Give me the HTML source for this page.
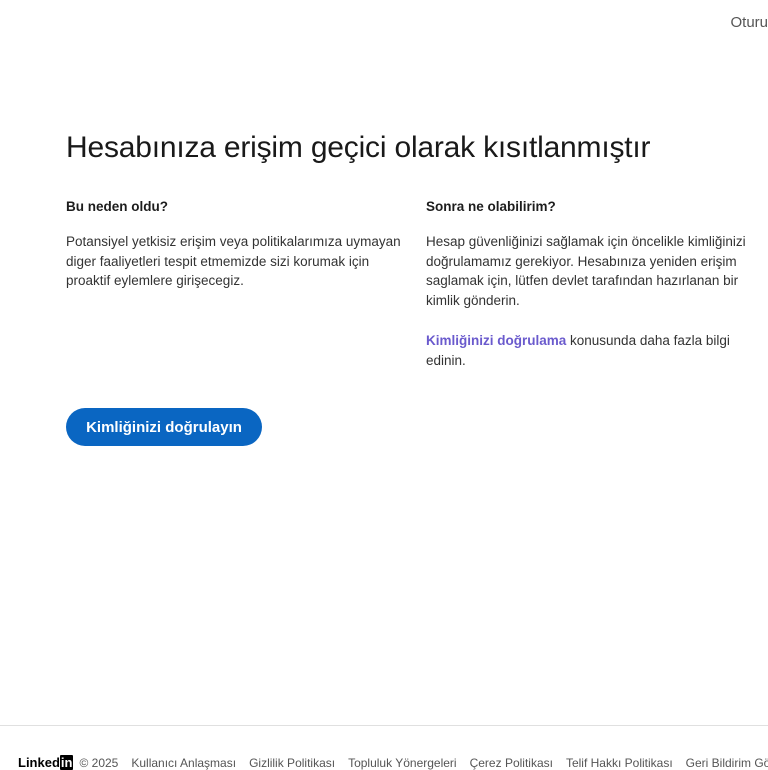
<!DOCTYPE html>
<html><head><meta charset="utf-8"><style>
body{margin:0;width:768px;height:768px;overflow:hidden;background:#fff;font-family:"Liberation Sans",sans-serif;color:#1d1d1d;position:relative}
.a{position:absolute}
p{margin:0}
.h{font-size:30px;left:66px;top:131px;white-space:nowrap;color:#191919;letter-spacing:-0.2px}
.t{font-size:13.5px;font-weight:bold;top:199px}
.b{font-size:13.5px;line-height:19.5px;color:#333}
.btn{left:66px;top:408px;width:196px;height:38px;border-radius:19px;background:#0a66c2;color:#fff;font-weight:bold;font-size:15px;text-align:center;line-height:39px}
.f{top:755px;left:18px;font-size:12px;color:#555;white-space:nowrap}
.f span{margin-right:13px}
</style></head><body>
<div class="a" style="right:0;top:14px;font-size:15px;color:#555">Oturu</div>
<div class="a h">Hesabınıza erişim geçici olarak kısıtlanmıştır</div>
<div class="a t" style="left:66px">Bu neden oldu?</div>
<div class="a t" style="left:426px">Sonra ne olabilirim?</div>
<div class="a b" style="left:66px;top:232px;width:340px">Potansiyel yetkisiz erişim veya politikalarımıza uymayan diger faaliyetleri tespit etmemizde sizi korumak için proaktif eylemlere girişecegiz.</div>
<div class="a b" style="left:426px;top:232px;width:330px">Hesap güvenliğinizi sağlamak için öncelikle kimliğinizi doğrulamamız gerekiyor. Hesabınıza yeniden erişim saglamak için, lütfen devlet tarafından hazırlanan bir kimlik gönderin.</div>
<div class="a b" style="left:426px;top:331px;width:330px"><b style="color:#6a5acd">Kimliğinizi doğrulama</b> konusunda daha fazla bilgi edinin.</div>
<div class="a btn">Kimliğinizi doğrulayın</div>
<div class="a" style="left:0;right:0;top:725px;border-top:1px solid #e0e0e0"></div>
<div class="a f"><span style="font-weight:bold;color:#000;font-size:13px;margin-right:6px">Linked<span style="background:#000;color:#fff;padding:0 1px;margin:0;border-radius:1px">in</span></span><span>© 2025</span><span>Kullanıcı Anlaşması</span><span>Gizlilik Politikası</span><span>Topluluk Yönergeleri</span><span>Çerez Politikası</span><span>Telif Hakkı Politikası</span><span>Geri Bildirim Gönder</span></div>
</body></html>
